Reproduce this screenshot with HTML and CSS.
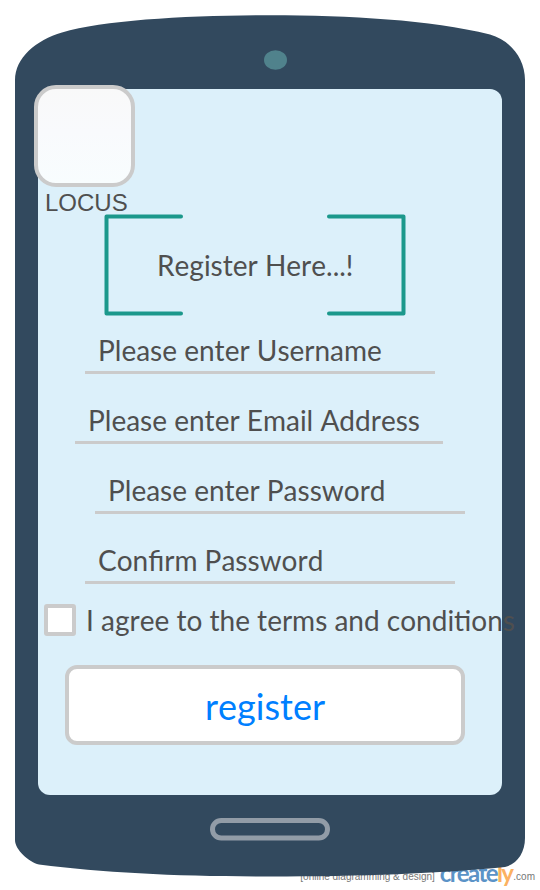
FILE: index.html
```html
<!DOCTYPE html>
<html lang="en">
<head>
<meta charset="utf-8">
<title>Register</title>
<link rel="stylesheet" href="styles.css">
</head>
<body>
<div class="stage">
  <div class="credit"><span class="tagline">[online diagramming &amp; design]</span><span class="brand">create<span class="brand-ly">ly</span></span><span class="domain">.com</span></div>
  <svg class="shell" width="540" height="890" viewBox="0 0 540 890" aria-hidden="true">
    <path fill="#32495e" d="M15 80 C15 58 36 40 62 32.500 C105 20 190 15.300 270 15.300 C350 15.300 430 20 490 34.500 C510 40 525 58 525 80 V838 C525 853 517 864 505 867 C440 873.500 360 876.500 270 876.500 C180 876.500 105 873 39 864.500 C29 862 15 850 15 840 Z"/>
    <ellipse cx="275.500" cy="60" rx="11.500" ry="9.800" fill="#50828c"/>
    <rect x="212.500" y="820.500" width="115" height="17.500" rx="8.700" fill="none" stroke="#929ca7" stroke-width="5"/>
  </svg>
  <main class="screen">
    <div class="logo"></div>
    <div class="logo-name">LOCUS</div>
    <div class="heading">
      <svg class="brackets" width="302" height="102" viewBox="0 0 302 102" aria-hidden="true">
        <path d="M77 2.500 H2.500 V99.500 H77 M225 2.500 H299.500 V99.500 H225" fill="none" stroke="#1b988b" stroke-width="4" stroke-linecap="round" stroke-linejoin="round"/>
      </svg>
      <h1 class="title">Register Here...!</h1>
    </div>
    <form class="form">
      <div class="field username">Please enter Username</div>
      <div class="field email">Please enter Email Address</div>
      <div class="field password">Please enter Password</div>
      <div class="field confirm">Confirm Password</div>
      <div class="terms"><span class="box"></span><span class="terms-text">I agree to the terms and conditions</span></div>
      <button class="register" type="button">register</button>
    </form>
  </main>
</div>
</body>
</html>
```

FILE: styles.css
```css
* { box-sizing: border-box; }
body { margin: 0; background: #fff; font-family: Lato, sans-serif; color: #4f4f4f; font-kerning: none; }
.stage { position: relative; width: 540px; height: 890px; overflow: hidden; padding: 88.500px 38px 0 37.500px; }
.shell { position: absolute; left: 0; top: 0; }
.screen { position: relative; height: 706.500px; background: #dcf0fa; border-radius: 12px; display: flow-root; }
.logo { width: 101px; height: 102px; margin: -4px 0 0 -3.400px; border: 4px solid #cbcbcb; border-radius: 22px; background: linear-gradient(#f9f9f9, #f9fafd 45%, #f8fdfe); }
.logo-name { height: 28px; padding-left: 7.500px; font: 24px/31px "Liberation Sans", sans-serif; white-space: nowrap; }
.heading { position: relative; width: 302px; height: 102px; margin: -0.500px 0 0 66.500px; }
.brackets { position: absolute; left: 0; top: 0; }
.title { margin: 0; padding-left: 53px; font-size: 28px; font-weight: 400; line-height: 103px; height: 102px; white-space: nowrap; }
.form { display: flex; flex-direction: column; align-items: flex-start; gap: 26px; padding-top: 14px; }
.field { height: 44px; padding-left: 13px; border-bottom: 3px solid #cbcbcb; font-size: 28px; line-height: 40px; white-space: nowrap; }
.username { width: 350px; margin-left: 47.500px; }
.email { width: 368px; margin-left: 37.500px; }
.password { width: 370px; margin-left: 57.500px; }
.confirm { width: 370px; margin-left: 47.500px; }
.terms { display: flex; align-items: center; gap: 10px; height: 32px; margin: -6px 0 0 6.500px; font-size: 28px; line-height: 32px; white-space: nowrap; }
.box { width: 32px; height: 32px; border: 4px solid #cbcbcb; border-radius: 3px; background: #fff; }
.register { width: 400px; height: 80px; margin: 3px 0 0 27.500px; padding: 2px 0 0; border: 4px solid #cbcbcb; border-radius: 12px; background: #fff; color: #007fff; font: 36px Lato, sans-serif; font-kerning: none; }
.credit { position: absolute; right: 5px; top: 859px; display: flex; align-items: baseline; color: #777; font: 10px/24px "Liberation Sans", sans-serif; font-kerning: none; white-space: nowrap; }
.tagline { margin-right: 5px; }
.brand { position: relative; top: 2px; color: #5b93c7; font: 700 24px/24px Lato, sans-serif; letter-spacing: -1.600px; margin-right: 1px; }
.brand-ly { color: #fbb161; }
```
